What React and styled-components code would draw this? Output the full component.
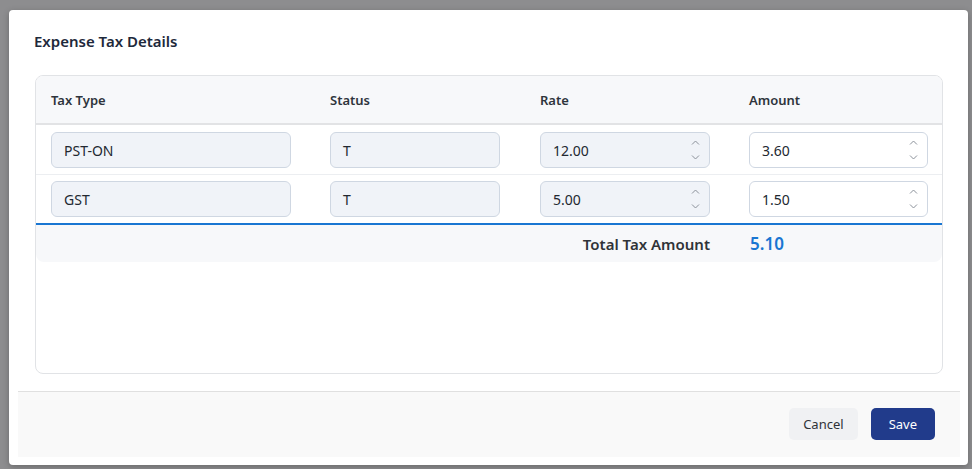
import React from "react"
import styled, { createGlobalStyle } from "styled-components"

const GlobalStyle = createGlobalStyle`
  html, body {
    margin: 0;
    padding: 0;
    background: #8d8d8f;
    font-family: "Noto Sans", "Open Sans", sans-serif;
  }
`

const Backdrop = styled.div`
  width: 972px;
  height: 469px;
  padding: 10px 4px 4px 9px;
  box-sizing: border-box;
`

const Modal = styled.div`
  width: 959px;
  height: 455px;
  background: #fff;
  border-radius: 4px;
  display: flex;
  flex-direction: column;
  box-shadow: 0 2px 6px rgba(0, 0, 0, 0.25);
`

const Header = styled.div`
  padding: 22px 25px 25px;
`

const Title = styled.h2`
  margin: 0;
  font-size: 15px;
  line-height: 18px;
  font-weight: 600;
  color: #1e293b;
`

const Body = styled.div`
  padding: 0 25px 0 26px;
`

const Card = styled.div`
  height: 299px;
  box-sizing: border-box;
  border: 1px solid #e1e3e6;
  border-radius: 8px;
  overflow: hidden;
`

const Row = styled.div`
  display: grid;
  grid-template-columns: 279px 210px 209px 1fr;
  align-items: center;
  padding: 0 15px;
  background: ${(p) => (p.$shade ? "#f7f8fa" : "#fff")};
  border-bottom: ${(p) => p.$border || "none"};
`

const HeadRow = styled(Row)`
  height: 47px;
`

const BodyRow = styled(Row)`
  padding-top: ${(p) => (p.$first ? "7px" : "6px")};
  padding-bottom: 6px;
`

const TotalRow = styled(Row)`
  height: 37px;
  border-radius: 0 0 8px 8px;
`

const HeadCell = styled.div`
  font-size: 13px;
  font-weight: 600;
  color: #2e343c;
`

const Field = styled.div`
  position: relative;
  width: ${(p) => p.$w || "100%"};
  height: 36px;
  box-sizing: border-box;
  border: 1px solid #cfd7e2;
  border-radius: 6px;
  background: ${(p) => (p.$editable ? "#fff" : "#f0f3f8")};
  display: flex;
  align-items: center;
  padding: 0 12px;
  font-size: 14px;
  color: #222831;
`

const Spinner = styled.div`
  position: absolute;
  right: 9px;
  top: 7px;
  bottom: 7px;
  display: flex;
  flex-direction: column;
  justify-content: space-between;
`

const TotalLabel = styled.div`
  grid-column: 3;
  width: 170px;
  text-align: right;
  font-size: 15px;
  font-weight: 600;
  color: #2f3338;
`

const TotalValue = styled.div`
  grid-column: 4;
  padding-left: 1px;
  font-size: 17px;
  font-weight: 600;
  color: #1976d2;
`

const Footer = styled.div`
  margin: 17px 8px 8px 9px;
  height: 66px;
  box-sizing: border-box;
  border-top: 1px solid #e0e0e0;
  background: #f9f9f9;
  display: flex;
  justify-content: flex-end;
  align-items: center;
  gap: 13px;
  padding: 0 25px 1px 0;
`

const Button = styled.button`
  height: 32px;
  padding: 0 ${(p) => (p.$primary ? "18px" : "14px")};
  border: none;
  border-radius: 5px;
  font-family: inherit;
  font-size: 13px;
  color: ${(p) => (p.$primary ? "#fff" : "#2f3338")};
  background: ${(p) => (p.$primary ? "#213b8b" : "#f0f1f3")};
`

function Chevron({ up }) {
  return (
    <svg width="9" height="5" viewBox="0 0 9 5" style={{ display: "block" }}>
      <path
        d={up ? "M1 4.5 L4.5 1 L8 4.5" : "M1 0.5 L4.5 4 L8 0.5"}
        fill="none"
        stroke="#8a9099"
        strokeWidth="1"
      />
    </svg>
  )
}

function NumberField({ value, editable, w }) {
  return (
    <Field $editable={editable} $w={w}>
      {value}
      <Spinner>
        <Chevron up />
        <Chevron />
      </Spinner>
    </Field>
  )
}

const taxes = [
  { type: "PST-ON", status: "T", rate: "12.00", amount: "3.60" },
  { type: "GST", status: "T", rate: "5.00", amount: "1.50" },
]

export default function App() {
  return (
    <>
      <GlobalStyle />
      <Backdrop>
        <Modal>
          <Header>
            <Title>Expense Tax Details</Title>
          </Header>
          <Body>
            <Card>
              <HeadRow $shade $border="2px solid #e2e3e5">
                <HeadCell>Tax Type</HeadCell>
                <HeadCell>Status</HeadCell>
                <HeadCell>Rate</HeadCell>
                <HeadCell>Amount</HeadCell>
              </HeadRow>
              {taxes.map((t, i) => (
                <BodyRow
                  key={t.type}
                  $first={i === 0}
                  $border={
                    i === taxes.length - 1
                      ? "2px solid #1976d2"
                      : "1px solid #eceef1"
                  }
                >
                  <Field $w="240px">{t.type}</Field>
                  <Field $w="170px">{t.status}</Field>
                  <NumberField value={t.rate} w="170px" />
                  <NumberField value={t.amount} editable w="179px" />
                </BodyRow>
              ))}
              <TotalRow $shade>
                <TotalLabel>Total Tax Amount</TotalLabel>
                <TotalValue>5.10</TotalValue>
              </TotalRow>
            </Card>
          </Body>
          <Footer>
            <Button>Cancel</Button>
            <Button $primary>Save</Button>
          </Footer>
        </Modal>
      </Backdrop>
    </>
  )
}
